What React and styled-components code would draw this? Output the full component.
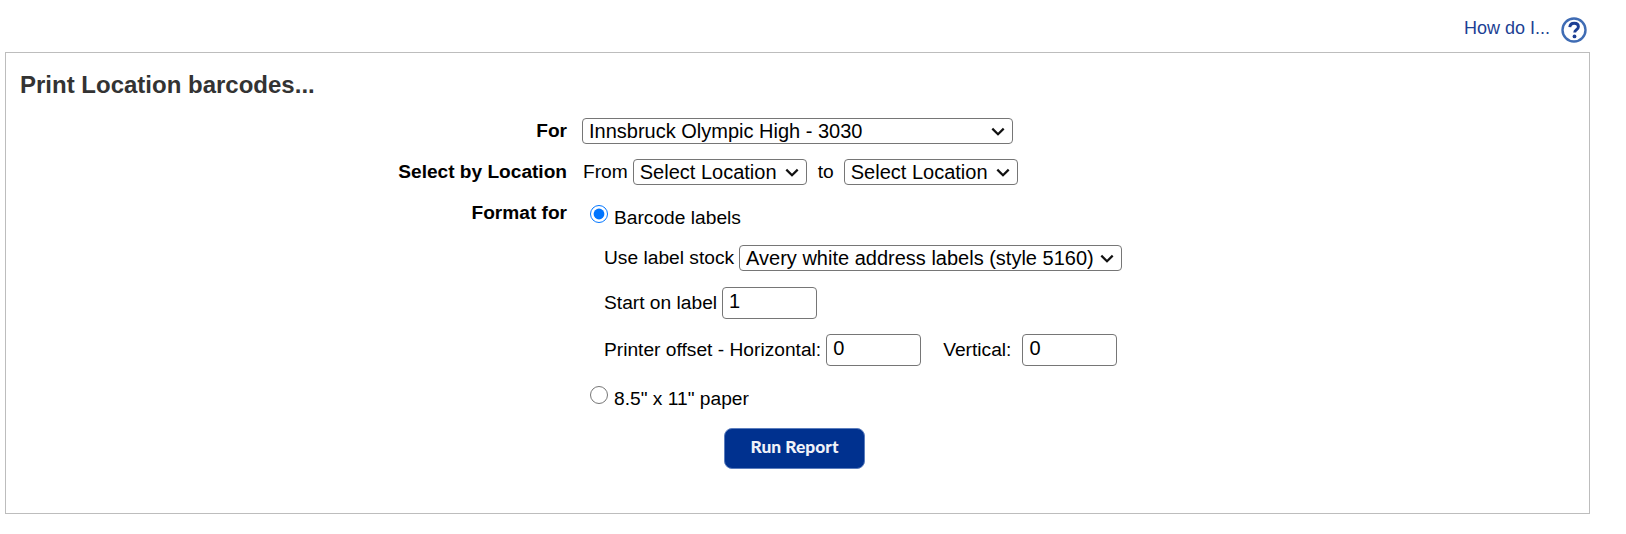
import React from 'react';
import styled, { createGlobalStyle } from 'styled-components';

const GlobalStyle = createGlobalStyle`
  html, body {
    margin: 0;
    padding: 0;
    background: #fff;
    font-family: "Liberation Sans", Arial, sans-serif;
    color: #000;
  }
`;

const chevron = `url("data:image/svg+xml,%3Csvg xmlns='http://www.w3.org/2000/svg' width='14' height='9' viewBox='0 0 14 9'%3E%3Cpath d='M1.3 1.6l5.7 5.7 5.7-5.7' fill='none' stroke='%23111' stroke-width='2.2'/%3E%3C/svg%3E")`;

const Page = styled.div`
  width: 1626px;
  height: 534px;
  overflow: hidden;
  padding-left: 5px;
  box-sizing: border-box;
`;

const HelpBar = styled.div`
  height: 52px;
  width: 1585px;
  box-sizing: border-box;
  display: flex;
  justify-content: flex-end;
  align-items: flex-start;
  padding-top: 17px;
  padding-right: 3px;
  gap: 11px;
`;

const HelpLink = styled.a`
  color: #1d3f94;
  font-size: 18px;
  line-height: 22px;
  text-decoration: none;
`;

const Panel = styled.div`
  width: 1585px;
  height: 462px;
  box-sizing: border-box;
  border: 1px solid #bdbdbd;
  padding: 19px 14px 0;
`;

const Title = styled.h2`
  margin: 0 0 21px;
  font-size: 24px;
  line-height: 25px;
  font-weight: bold;
  color: #333;
`;

const Row = styled.div`
  display: flex;
  align-items: center;
  margin-top: ${p => p.$top || 0}px;
  height: ${p => p.$height || 26}px;
`;

const Label = styled.div`
  width: 547px;
  margin-right: 15px;
  text-align: right;
  font-weight: bold;
  font-size: 19.1px;
  line-height: 22px;
  flex: none;
  align-self: flex-start;
  padding-top: 2px;
`;

const Text = styled.span`
  font-size: 19.2px;
  line-height: 22px;
  margin: 0 ${p => p.$right ?? 5}px 0 ${p => p.$left ?? 0}px;
  flex: none;
`;

const Select = styled.select`
  appearance: none;
  font-family: "Liberation Sans", Arial, sans-serif;
  font-size: 20px;
  width: ${p => p.$width}px;
  height: 26px;
  box-sizing: border-box;
  background: #fff ${chevron} no-repeat right 7px center;
  color: #000;
  border: 1px solid #767676;
  border-radius: 4px;
  padding: 0 0 0 6px;
  flex: none;
`;

const NumberInput = styled.input`
  font-family: "Liberation Sans", Arial, sans-serif;
  font-size: 20px;
  width: 95px;
  height: 32px;
  box-sizing: border-box;
  border: 1px solid #767676;
  border-radius: 4px;
  padding: 0 6px 3px;
  color: #000;
  flex: none;
`;

const Radio = styled.input`
  width: 18px;
  height: 18px;
  margin: ${p => p.$down || 0}px 6px 0 8px;
  flex: none;
`;

const RadioRow = styled.div`
  display: flex;
  align-items: flex-start;
  height: ${p => p.$height}px;
  margin-top: ${p => p.$top || 0}px;
  margin-left: ${p => p.$left || 0}px;
`;

const RadioText = styled(Text)`
  margin-top: ${p => p.$down}px;
`;

const Options = styled.div`
  margin-left: 584px;
`;

const RunButton = styled.button`
  display: block;
  width: 141px;
  height: 41px;
  margin: 16px 0 0 704px;
  border: 1px solid #5b7dbd;
  border-radius: 8px;
  background: #00318f;
  color: #f0f2f8;
  font-family: Lato, "Open Sans", sans-serif;
  font-size: 17.4px;
  font-weight: 900;
  padding: 0 0 4px;
`;

const HelpIcon = () => (
  <svg width="26" height="26" viewBox="0 0 26 26" aria-hidden="true">
    <circle cx="13" cy="13" r="11.5" fill="#fff" stroke="#3f6cb4" strokeWidth="2.4" />
    <path d="M8.8 10.2c.2-2.6 2.1-3.9 4.4-3.9 2.5 0 4.2 1.4 4.2 3.4 0 1.7-1 2.5-2.2 3.3-1.1.7-1.5 1.2-1.5 2.6" fill="none" stroke="#1d3f94" strokeWidth="2.9" />
    <circle cx="13.5" cy="19.4" r="1.9" fill="#1d3f94" />
  </svg>
);

export default function App() {
  return (
    <Page>
      <GlobalStyle />
      <HelpBar>
        <HelpLink href="#">How do I...</HelpLink>
        <HelpIcon />
      </HelpBar>
      <Panel>
        <Title>Print Location barcodes...</Title>
        <Row>
          <Label>For</Label>
          <Select $width={431} defaultValue="3030">
            <option value="3030">Innsbruck Olympic High - 3030</option>
          </Select>
        </Row>
        <Row $top={15}>
          <Label>Select by Location</Label>
          <Text $left={1}>From</Text>
          <Select $width={174}>
            <option>Select Location</option>
          </Select>
          <Text $left={11} $right={10}>to</Text>
          <Select $width={174}>
            <option>Select Location</option>
          </Select>
        </Row>
        <RadioRow $top={15} $height={30}>
          <Label>Format for</Label>
          <Radio type="radio" name="format" defaultChecked $down={5} />
          <RadioText $down={7}>Barcode labels</RadioText>
        </RadioRow>
        <Options>
          <Row $top={15}>
            <Text>Use label stock</Text>
            <Select $width={383}>
              <option>Avery white address labels (style 5160)</option>
            </Select>
          </Row>
          <Row $top={16} $height={32}>
            <Text>Start on label</Text>
            <NumberInput type="text" defaultValue="1" />
          </Row>
          <Row $top={15} $height={32}>
            <Text>Printer offset - Horizontal:</Text>
            <NumberInput type="text" defaultValue="0" />
            <Text $left={22} $right={11}>Vertical:</Text>
            <NumberInput type="text" defaultValue="0" />
          </Row>
        </Options>
        <RadioRow $top={20} $height={26} $left={562}>
          <Radio type="radio" name="format" />
          <RadioText $down={2}>8.5" x 11" paper</RadioText>
        </RadioRow>
        <RunButton type="button">Run Report</RunButton>
      </Panel>
    </Page>
  );
}
